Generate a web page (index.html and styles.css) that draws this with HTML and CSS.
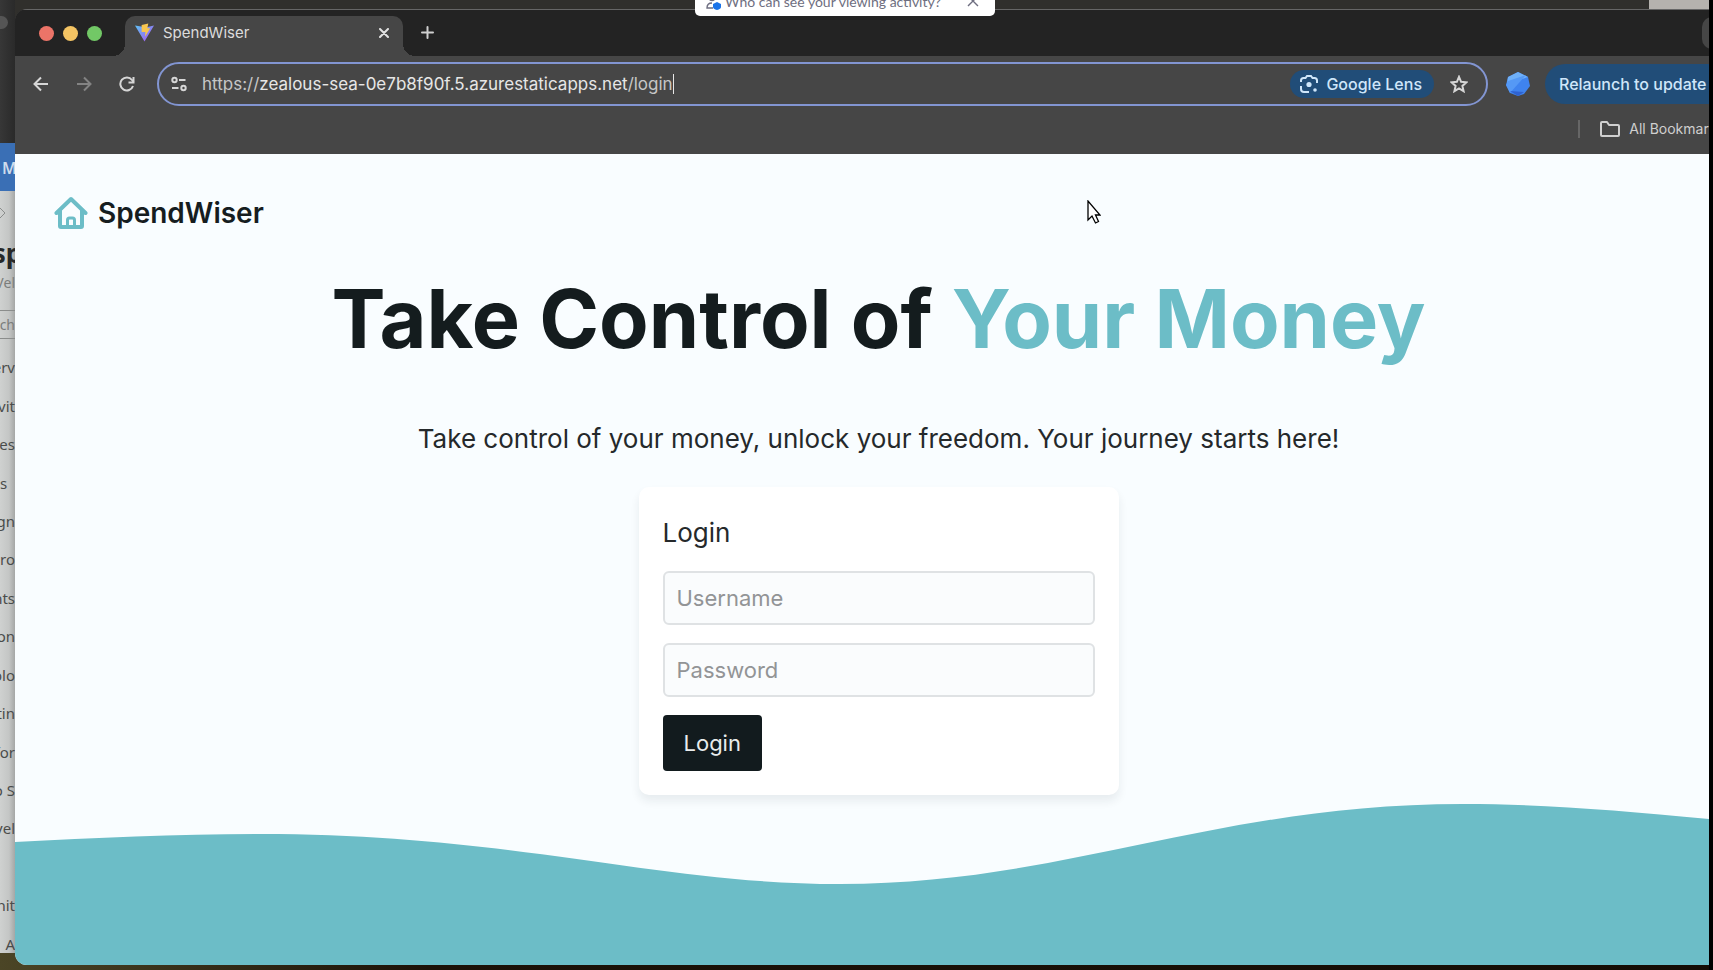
FILE: index.html
```
<!DOCTYPE html>
<html lang="en">
<head>
<meta charset="utf-8">
<title>SpendWiser</title>
<link rel="stylesheet" href="styles.css">
</head>
<body>
<div class="desktop">
  <aside class="behind">
    <div class="behind-top"><span class="behind-dot"></span></div>
    <div class="behind-blue">M</div>
    <div class="behind-panel">
      <svg class="behind-chevron" viewBox="0 0 15 12"><path d="M0 1l5 5-5 5" fill="none" stroke="#8b8d8c"/></svg>
      <div class="behind-name">sp</div>
      <div class="behind-kind">Vel</div>
      <div class="behind-search">ch</div>
      <ul class="behind-list">
        <li>erv</li><li>vit</li><li>es</li><li class="short">s</li><li>gn</li><li>ro</li><li>nts</li><li>on</li><li>olo</li><li>tin</li><li>for</li><li>o S</li><li>vel</li><li></li><li>nit</li><li>A</li>
      </ul>
    </div>
  </aside>

  <div class="window-clip">
  <div class="window">
    <header class="tabstrip">
      <div class="lights"><span class="light red"></span><span class="light yellow"></span><span class="light green"></span></div>
      <div class="tab">
        <svg class="favicon" viewBox="0 0 20 20">
          <defs>
            <linearGradient id="vite-a" x1="0" y1="0" x2="1" y2="1"><stop offset="0" stop-color="#5cc3f5"/><stop offset="1" stop-color="#b04df0"/></linearGradient>
          </defs>
          <path d="M0 2l10 17L20 2l-8 2-4-.5z" fill="url(#vite-a)"/>
          <path d="M7 1.500l7-1.500-1 5h3l-5.500 9 .5-5H7z" fill="#f8c64f"/>
        </svg>
        <span class="tab-title">SpendWiser</span>
        <button class="icon-btn" aria-label="Close tab"><svg width="10" height="10" viewBox="0 0 10 10"><path d="M1 1l8 8M9 1L1 9" stroke="#e2e2e2" stroke-width="2" stroke-linecap="round"/></svg></button>
      </div>
      <button class="icon-btn new-tab" aria-label="New tab"><svg width="13" height="13" viewBox="0 0 13 13"><path d="M6.500 1v11M1 6.500h11" stroke="#cfcfcf" stroke-width="2" stroke-linecap="round"/></svg></button>
      <button class="tab-search" aria-label="Search tabs"></button>
    </header>

    <nav class="toolbar">
      <div class="nav-buttons">
        <button class="icon-btn" aria-label="Back"><svg width="16" height="16" viewBox="0 0 16 16" fill="none" stroke="#d6d6d6" stroke-width="2"><path d="M15 8H2M8 1.500L1.500 8 8 14.500"/></svg></button>
        <button class="icon-btn" aria-label="Forward"><svg width="16" height="16" viewBox="0 0 16 16" fill="none" stroke="#838383" stroke-width="2"><path d="M1 8h13M8 1.500L14.500 8 8 14.500"/></svg></button>
        <button class="icon-btn" aria-label="Reload"><svg width="16" height="16" viewBox="0 0 16 16" fill="none" stroke="#d6d6d6" stroke-width="2"><path d="M14 10A6.500 6.500 0 1 1 13 4l1.500 2"/><path d="M14.500 1v5.500H9.500"/></svg></button>
      </div>
      <div class="omnibox">
        <svg class="tune" width="16" height="16" viewBox="0 0 16 16" fill="none" stroke="#d6d6d6" stroke-width="2"><circle cx="3.500" cy="4" r="2.200"/><path d="M8 4h6.500M1 12h6.500"/><circle cx="12.500" cy="12" r="2.200"/></svg>
        <div class="url"><span class="scheme">https://</span>zealous-sea-0e7b8f90f.5.azurestaticapps.net<span class="scheme">/login</span><span class="caret"></span></div>
        <button class="lens">
          <svg width="18" height="18" viewBox="0 0 18 18" fill="none" stroke="#cfe6fa" stroke-width="2"><path d="M1 7V5.500Q1 3 3.500 3H5.500L7 1h4l1.500 2h2Q17 3 17 5.500V8M1 11v3q0 3 3 3h5"/><circle cx="9" cy="9.500" r="2.600" fill="#cfe6fa" stroke="none"/><circle cx="15" cy="15" r="1.800" fill="#cfe6fa" stroke="none"/></svg>
          Google Lens
        </button>
        <button class="icon-btn" aria-label="Bookmark this tab"><svg width="18" height="18" viewBox="0 0 18 18" fill="none" stroke="#d6d6d6" stroke-width="2"><path d="M9 1.800l2.100 5 5.400.5-4.100 3.600 1.200 5.300L9 13.400l-4.600 2.800 1.200-5.300L1.500 7.300l5.400-.5z"/></svg></button>
      </div>
      <svg class="gem" viewBox="0 0 24 24"><path d="M12 0l10 5 2 9-6 8-6 2-8-3-4-8L2 5z" fill="#3f83ee"/><path d="M12 0l10 5L1 12 2 5z" fill="#6fb0f8"/><path d="M20 3L4 21l-4-8 2-4z" fill="#5599f5"/><path d="M4 19l14 1-6 4z" fill="#2f62cf"/></svg>
      <button class="relaunch">Relaunch to update</button>
    </nav>

    <div class="bookmarks">
      <span class="divider"></span>
      <button class="all-bookmarks">
        <svg width="20" height="16" viewBox="0 0 20 16" fill="none" stroke="#cfcfcf" stroke-width="2" stroke-linejoin="round"><path d="M1 2q0-1 1-1h5l2 3h9q1 0 1 1v9q0 1-1 1H2q-1 0-1-1z"/></svg>
        All Bookmarks
      </button>
    </div>

    <main class="page">
      <a class="brand" href="#">
        <svg width="34" height="34" viewBox="0 0 34 34" fill="none" stroke="#6cbdc7" stroke-width="4" stroke-linecap="round" stroke-linejoin="round"><path d="M2.500 17L17 3l14.500 14"/><path d="M6 14.500V30q0 1 1 1h20q1 0 1-1V14.500"/><path d="M13.500 30v-6q0-2 2-2h3q2 0 2 2v6" stroke-width="3"/></svg>
        SpendWiser
      </a>
      <h1 class="headline">Take Control of <span class="accent">Your Money</span></h1>
      <p class="tagline">Take control of your money, unlock your freedom. Your journey starts here!</p>
      <form class="card">
        <h2 class="card-title">Login</h2>
        <input class="field" type="text" placeholder="Username" aria-label="Username">
        <input class="field" type="password" placeholder="Password" aria-label="Password">
        <button class="submit" type="button">Login</button>
      </form>
      <svg class="wave" viewBox="0 0 1727 160" preserveAspectRatio="none"><path d="M0 37C80 33 165 29 245 29C500 29 640 79 825 79C1050 79 1200 -1 1448 -1C1540 -1 1620 7 1727 17V160H0z" fill="#6cbdc7"/></svg>
    </main>
  </div>
  </div>

  <div class="notice">
    <svg width="16" height="18" viewBox="0 0 16 18"><circle cx="6" cy="5" r="3.500" fill="none" stroke="#6e6e80" stroke-width="1.400"/><path d="M7 16H1q0-5 5-5" fill="none" stroke="#6e6e80" stroke-width="1.400"/><path d="M11 10l4 2v3q0 2-4 3-4-1-4-3v-3z" fill="#1a73e8"/></svg>
    <span class="notice-text">Who can see your viewing activity?</span>
    <button class="icon-btn" aria-label="Dismiss"><svg width="12" height="12" viewBox="0 0 12 12"><path d="M1 1l10 10M11 1L1 11" stroke="#6e6e80" stroke-width="1.400"/></svg></button>
  </div>

  <svg class="cursor" width="14" height="24" viewBox="0 0 14 24"><path d="M1 1v19l4-4 3.500 7 3-1.500L8.500 15H13z" fill="#fff" stroke="#000" stroke-width="1.300"/></svg>
</div>
</body>
</html>
```
FILE: styles.css
```
* { box-sizing: border-box; }

body {
  margin: 0;
  background: #000;
  font-family: Inter, "Liberation Sans", sans-serif;
}

button { font-family: inherit; border: 0; cursor: default; }

.desktop {
  position: relative;
  display: flex;
  height: 100vh;
  overflow: hidden;
  padding: 9px 4px 5px 0;
  background:
    linear-gradient(#000, #000) right / 4px 100% no-repeat,
    linear-gradient(#b5b2ae, #b5b2ae) right top / 64px 9px no-repeat,
    linear-gradient(#302f2c, #302f2c) top / 100% 40px no-repeat,
    linear-gradient(90deg, #4b4526, #1c1208 25%, #150d05);
}

/* Window partly hidden behind the browser */
.behind {
  flex: none;
  display: flex;
  flex-direction: column;
  width: 15px;
  margin: -9px 0 12px;
  overflow: hidden;
  font-family: "Noto Sans", sans-serif;
  color: #4a4c4b;
}
.behind-top { height: 143px; padding-top: 16px; background: linear-gradient(90deg, #373737, #2a2a2a); }
.behind-dot { display: block; width: 8px; height: 13px; border-radius: 0 7px 7px 0; background: #555; }
.behind-blue {
  height: 48px;
  padding-left: 2px;
  background: #3a6fb5;
  color: #cfdcec;
  font-size: 16px;
  font-weight: 600;
  line-height: 50px;
}
.behind-panel {
  flex: 1;
  display: flex;
  flex-direction: column;
  background: linear-gradient(90deg, #cfd1d0, #c4c6c5 60%, #a5a7a6);
}
.behind-chevron { width: 15px; height: 12px; margin-top: 16px; }
.behind-name, .behind-kind, .behind-search { display: flex; justify-content: flex-end; }
.behind-name { justify-content: center; margin-top: 14px; font-size: 26px; font-weight: 700; line-height: 40px; color: #262829; }
.behind-kind { font-size: 14px; line-height: 20px; color: #7b7d7c; }
.behind-search {
  margin-top: 17px;
  border: solid #8b8d8c;
  border-width: 1px 0;
  font-size: 14px;
  line-height: 27px;
  color: #7b7d7c;
}
.behind-list {
  flex: 1;
  display: grid;
  grid-template-columns: minmax(0, 1fr);
  grid-auto-rows: 1fr;
  align-items: center;
  margin: 9px 0 -10px;
  padding: 0;
  list-style: none;
  font-size: 15px;
}
.behind-list li { display: flex; justify-content: flex-end; line-height: 20px; white-space: nowrap; }
.behind-list .short { justify-content: flex-start; }

/* Browser window */
.window-clip {
  flex: 1;
  min-width: 0;
  display: flex;
  overflow: hidden;
  border-radius: 12px 0 0 12px;
}
.window {
  flex: 1;
  display: flex;
  flex-direction: column;
  margin-right: -33px;
  border-top: 1px solid #666;
  background: #464646;
}

.icon-btn {
  display: flex;
  align-items: center;
  justify-content: center;
  padding: 0;
  background: none;
}

.tabstrip {
  display: flex;
  align-items: flex-end;
  height: 46px;
  background: #232323;
}
.lights { display: flex; gap: 9px; width: 110px; padding: 0 0 15px 24px; }
.light { width: 15px; height: 15px; border-radius: 50%; }
.red { background: #ec7468; }
.yellow { background: #f4c463; }
.green { background: #72c866; }
.tab {
  position: relative;
  display: flex;
  align-items: center;
  width: 278px;
  height: 40px;
  padding: 0 14px 7px 10px;
  border-radius: 10px 10px 0 0;
  background: #464646;
}
/* Flared feet of the active tab */
.tab::before,
.tab::after {
  content: "";
  position: absolute;
  bottom: 0;
  width: 12px;
  height: 12px;
}
.tab::before { right: 100%; background: radial-gradient(circle at 0 0, #232323 12px, #464646 12px); }
.tab::after { left: 100%; background: radial-gradient(circle at 100% 0, #232323 12px, #464646 12px); }
.favicon { width: 19px; height: 20px; }
.tab-title { flex: 1; margin-left: 9px; font-size: 15px; color: #dcdcdc; }
.new-tab { margin: 0 0 17px 18px; }
.tab-search {
  width: 40px;
  height: 32px;
  margin: 0 0 7px auto;
  border-radius: 10px;
  background: #464646;
}

.toolbar {
  display: flex;
  align-items: center;
  height: 56px;
}
.nav-buttons { display: flex; gap: 27px; padding: 0 22px 0 18px; }
.omnibox {
  flex: 1;
  display: flex;
  align-items: center;
  height: 44px;
  padding: 0 18px 0 12px;
  border: 2px solid #8295d2;
  border-radius: 22px;
}
.url {
  flex: 1;
  display: flex;
  align-items: center;
  margin-left: 15px;
  font-size: 17px;
  color: #e6e6e6;
}
.scheme { color: #c6c6c6; }
.caret { width: 1px; height: 20px; background: #e6e6e6; }
.lens {
  display: flex;
  align-items: center;
  gap: 8px;
  height: 28px;
  margin-right: 16px;
  padding: 0 12px 0 10px;
  border-radius: 14px;
  background: #214d78;
  color: #cfe6fa;
  font-size: 16px;
  font-weight: 500;
}
.gem { width: 24px; height: 24px; margin: 0 15px 0 18px; }
.relaunch {
  width: 197px;
  height: 40px;
  padding: 0 14px;
  border-radius: 20px 0 0 20px;
  background: #214d78;
  color: #cfe6fa;
  font-size: 16px;
  font-weight: 500;
  text-align: left;
}

.bookmarks {
  display: flex;
  align-items: center;
  justify-content: flex-end;
  gap: 20px;
  height: 42px;
  padding: 0 18px 9px 0;
}
.divider { width: 2px; height: 18px; background: #666; }
.all-bookmarks {
  display: flex;
  align-items: center;
  gap: 9px;
  padding: 0;
  background: none;
  color: #cfcfcf;
  font-size: 14px;
}

/* SpendWiser page */
.page {
  position: relative;
  flex: 1;
  display: flex;
  flex-direction: column;
  align-items: center;
  background: #f9fdff;
  color: #25292b;
}
.brand {
  align-self: flex-start;
  display: flex;
  align-items: center;
  gap: 10px;
  margin: 39px 0 0 39px;
  color: #161d1f;
  font-size: 28px;
  font-weight: 600;
  line-height: 40px;
  text-decoration: none;
}
.headline {
  margin: 38px 0 0;
  color: #141c1e;
  font-size: 81px;
  font-weight: 700;
  line-height: 96px;
}
.accent { color: #6cbdc7; }
.tagline { margin: 52px 0 0; font-size: 26px; line-height: 40px; }
.card {
  z-index: 1;
  display: flex;
  flex-direction: column;
  align-items: flex-start;
  width: 480px;
  margin-top: 28px;
  padding: 24px;
  border-radius: 10px;
  background: #fff;
  box-shadow: 0 6px 10px rgba(20, 40, 50, 0.08);
}
.card-title { margin: 0 0 16px; font-size: 26px; font-weight: 400; line-height: 44px; }
.field {
  width: 100%;
  height: 54px;
  margin-bottom: 18px;
  padding: 0 12px;
  border: 2px solid #dfe2e4;
  border-radius: 6px;
  background: #fafcfd;
  font-family: inherit;
  font-size: 22px;
}
.field::placeholder { color: #929496; }
.submit {
  height: 56px;
  padding: 0 21px;
  border-radius: 4px;
  background: #121b1e;
  color: #e9eced;
  font-size: 22px;
}
.wave { position: absolute; left: 0; bottom: 0; width: 100%; height: 160px; overflow: visible; }

/* Overlays */
.notice {
  position: absolute;
  top: -12px;
  left: 695px;
  display: flex;
  align-items: center;
  width: 300px;
  height: 28px;
  padding: 0 16px 2px 11px;
  border-radius: 5px;
  background: #fff;
  color: #6e6e80;
  font-family: Lato, sans-serif;
  font-size: 14px;
}
.notice-text { flex: 1; margin-left: 3px; white-space: nowrap; }
.cursor { position: absolute; left: 1087px; top: 200px; }
```
